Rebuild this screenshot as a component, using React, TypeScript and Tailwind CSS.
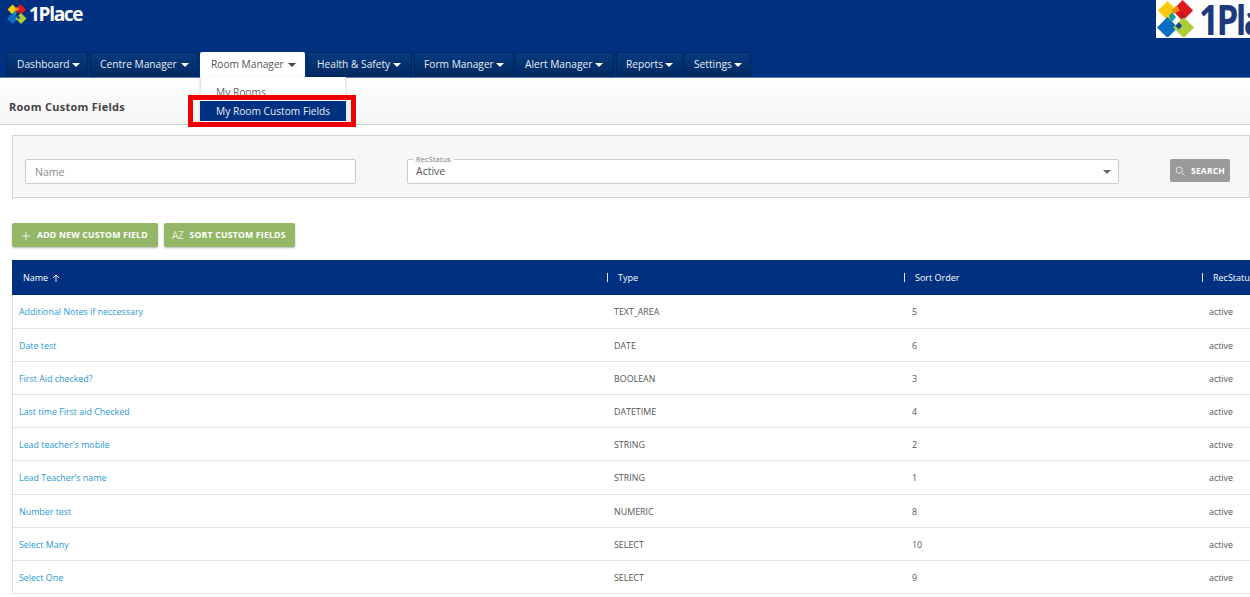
import React from "react";

const tabs = [
  { label: "Dashboard", cls: "w-[82px] pl-[10px] gap-[2px]" },
  { label: "Centre Manager", cls: "w-[108px] ml-[2px] pl-[9px] gap-[4px]" },
  { label: "Room Manager", cls: "w-[105px] ml-[2px] pl-[11px] gap-[4px]", active: true },
  { label: "Health & Safety", cls: "w-[105px] ml-[2px] pl-[9px] gap-[3px]" },
  { label: "Form Manager", cls: "w-[100px] ml-[2px] pl-[9px] gap-[2px]" },
  { label: "Alert Manager", cls: "w-[99px] ml-[1px] pl-[9px] gap-[3px]" },
  { label: "Reports", cls: "w-[67px] ml-[2px] pl-[9px] gap-[2px]" },
  { label: "Settings", cls: "w-[67px] ml-[1px] pl-[9px] gap-[2px]" },
];

const rows = [
  ["Additional Notes if neccessary", "TEXT_AREA", "5", "h-[34px]"],
  ["Date test", "DATE", "6", "h-[33px]"],
  ["First Aid checked?", "BOOLEAN", "3", "h-[33px]"],
  ["Last time First aid Checked", "DATETIME", "4", "h-[33px]"],
  ["Lead teacher's mobile", "STRING", "2", "h-[33px]"],
  ["Lead Teacher's name", "STRING", "1", "h-[34px]"],
  ["Number test", "NUMERIC", "8", "h-[33px]"],
  ["Select Many", "SELECT", "10", "h-[33px]"],
  ["Select One", "SELECT", "9", "h-[33px]"],
];

function Diamonds({ className }: { className: string }) {
  return (
    <svg viewBox="0 0 40 40" className={className}>
      <polygon points="11,1 21,11 11,21 1,11" fill="#fbc80a" />
      <polygon points="27,0 38,11 27,22 16,11" fill="#e0191f" />
      <polygon points="11,18 22,29 11,40 0,29" fill="#0a6fc0" />
      <polygon points="28,18 39,29 28,40 17,29" fill="#a9ce38" />
      <polygon points="18.5,8 21,5.5 24,11 19,14 16,11" fill="#f08a1e" />
      <polygon points="13,16 16,13 20,18 16,23 13,20" fill="#12a0a8" />
      <polygon points="27,13 30,16 27,20 24,16" fill="#b01c28" />
      <polygon points="19.5,27 23,23.5 26.5,27 23,31" fill="#1f3f92" />
    </svg>
  );
}

function Caret({ className }: { className: string }) {
  return <span className={`inline-block w-0 h-0 border-x-[4px] border-x-transparent border-t-[4px] ${className}`} />;
}

export default function App() {
  return (
    <div className="relative w-[1250px] h-[597px] overflow-hidden bg-white text-[#555] font-['Open_Sans','Noto_Sans',sans-serif]">
      <header className="relative h-[78px] bg-[#003180] border-b border-[#5d7fb5]">
        <div className="flex items-start justify-between h-[52px]">
          <div className="flex items-center gap-[2px] pl-[7px] pt-[4px]">
            <Diamonds className="w-[20px] h-[20px]" />
            <span className="text-[19px] leading-[20px] font-bold tracking-[-1.3px] text-white">1Place</span>
          </div>
          <div className="flex items-center w-[94px] h-[38px] bg-white overflow-hidden pl-[1px] gap-[4px] border-b border-[#f5f5f5]">
            <Diamonds className="w-[38px] h-[38px] shrink-0" />
            <span className="text-[41px] leading-[38px] font-bold tracking-[-3px] text-[#1d3a7d] whitespace-nowrap origin-left scale-x-[0.85]">1Pla</span>
          </div>
        </div>
        <nav className="flex pl-[6px] h-[25px]">
          {tabs.map((t) => (
            <div
              key={t.label}
              className={`${t.cls} h-[25px] flex items-center text-[10.2px] whitespace-nowrap rounded-t-[2px] ${
                t.active
                  ? "bg-white text-[#555]"
                  : "bg-gradient-to-b from-[#063a80] to-[#00295f] border border-[#00255a] border-b-0 text-[#e8edf5]"
              }`}
            >
              <span>{t.label}</span>
              <Caret className={t.active ? "border-t-[#444]" : "border-t-white"} />
            </div>
          ))}
        </nav>
      </header>

      <div className="h-[47px] bg-gradient-to-b from-white to-[#f4f4f4] border-b border-[#cfcfcf] flex items-center pl-[9px] pt-[13px]">
        <h1 className="text-[11px] font-bold tracking-[0.27px] text-[#444]">Room Custom Fields</h1>
      </div>

      <section className="ml-[12px] mt-[10px] h-[63px] bg-[#f7f7f7] border border-[#d4d4d4] flex items-start pl-[12px] pt-[23px]">
        <div className="w-[331px] h-[25px] bg-white border border-[#cccccc] rounded-[2px] flex items-center pl-[9px] pt-[2px] text-[10.5px] text-[#8a8a8a]">
          Name
        </div>
        <div className="relative ml-[51px] w-[712px] h-[25px] bg-white border border-[#cccccc] rounded-[2px] flex items-center justify-between pl-[8px] pr-[7px] text-[10.5px] text-[#555]">
          <span>Active</span>
          <Caret className="border-t-[#666]" />
          <span className="absolute left-[5px] -top-[5px] px-[3px] bg-[#f7f7f7] text-[7.6px] leading-[8px] text-[#888]">RecStatus</span>
        </div>
        <button className="ml-[51px] w-[60px] h-[23px] bg-[#9a9a9a] rounded-[2px] flex items-center pl-[5px] pt-[1px] gap-[6px] text-[8.5px] font-bold text-white tracking-[0.2px]">
          <svg viewBox="0 0 12 12" className="w-[10px] h-[10px]" fill="none" stroke="#e6e6e6" strokeWidth="1.2">
            <circle cx="5" cy="5" r="3.7" />
            <path d="M8 8l3.5 3.5" />
          </svg>
          SEARCH
        </button>
      </section>

      <div className="ml-[12px] mt-[25px] flex gap-[6px] h-[24px]">
        <button className="w-[146px] bg-[#93b766] rounded-[2px] shadow-[0_1px_2px_rgba(0,0,0,0.3)] flex items-center pl-[10px] pt-[1px] gap-[7px] text-[8.7px] font-bold text-white tracking-[0.2px] whitespace-nowrap">
          <svg viewBox="0 0 10 10" className="w-[8px] h-[8px]" stroke="white" strokeWidth="1">
            <path d="M5 0v10M0 5h10" />
          </svg>
          ADD NEW CUSTOM FIELD
        </button>
        <button className="w-[131px] bg-[#93b766] rounded-[2px] shadow-[0_1px_2px_rgba(0,0,0,0.3)] flex items-center pl-[8px] pt-[1px] gap-[6px] text-[8.7px] font-bold text-white tracking-[0.2px] whitespace-nowrap">
          <span className="text-[10px] font-normal text-[#e8f0da] tracking-[-0.3px]">AZ</span>
          SORT CUSTOM FIELDS
        </button>
      </div>

      <div className="ml-[12px] mt-[13px] w-[1490px]">
        <div className="grid grid-cols-[595px_297px_298px_300px] h-[35px] bg-[#003180] items-center text-[9px] text-white">
          <div className="pl-[11px] flex items-center gap-[4px]">
            Name
            <svg viewBox="0 0 8 8" className="w-[8px] h-[8px]" fill="none" stroke="white" strokeWidth="0.9">
              <path d="M4 8V1M1 4l3-3 3 3" />
            </svg>
          </div>
          {["Type", "Sort Order", "RecStatus"].map((h) => (
            <div key={h} className="flex items-center">
              <span className="w-[1px] h-[9px] bg-[#dfe6f0] mr-[10px]" />
              {h}
            </div>
          ))}
        </div>
        {rows.map(([name, type, order, h]) => (
          <div key={name} className={`grid grid-cols-[594px_298px_297px_300px] ${h} pt-[1px] items-center text-[8.9px] border-b border-l border-[#e2e2e2]`}>
            <a className="pl-[6px] text-[#2a9ad6]">{name}</a>
            <div className="pl-[7px]">{type}</div>
            <div className="pl-[7px]">{order}</div>
            <div className="pl-[7px]">active</div>
          </div>
        ))}
      </div>

      <div className="absolute left-[200px] top-[77px] w-[146px] h-[46px] bg-white border-x border-[#e6e6e6] shadow-[0_1px_3px_rgba(0,0,0,0.15)] text-[10.2px]">
        <div className="h-[24px] pl-[15px] pt-[8px] leading-[14px] text-[#666]">My Rooms</div>
      </div>
      <div className="absolute left-[188px] top-[95px] w-[168px] h-[32px] border-[5px] border-[#ee0000] p-[1px_5px_0_7px]">
        <div className="h-[20px] bg-[#003180] flex items-center pl-[16px] pt-[1px] text-[10.2px] text-[#e8edf5] whitespace-nowrap">
          My Room Custom Fields
        </div>
      </div>
    </div>
  );
}
